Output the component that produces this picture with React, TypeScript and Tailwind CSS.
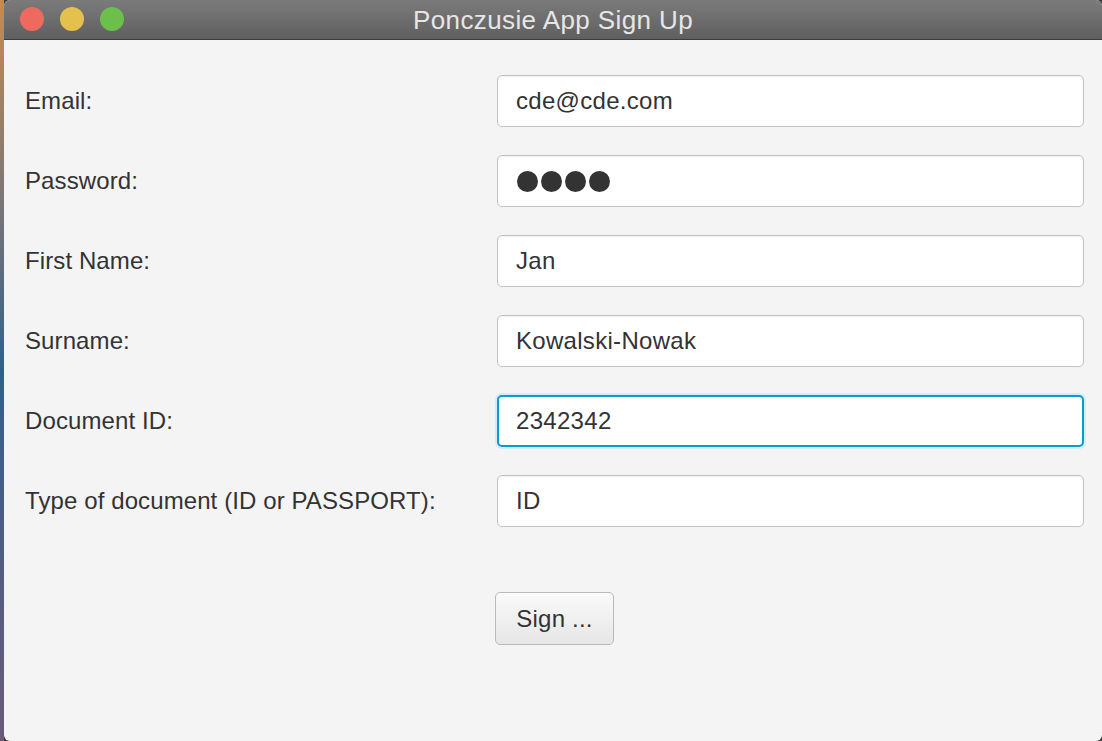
import React from "react";

const font = { fontFamily: '"Liberation Sans", Arial, sans-serif' };

function Field({ label, value, focused, password }: { label: string; value: string; focused?: boolean; password?: boolean }) {
  return (
    <div className="flex items-center h-[52px]">
      <div className="w-[472px] text-[24px] text-[#333] tracking-[0.1px]">{label}</div>
      <div
        className={
          focused
            ? "w-[587px] h-[52px] rounded-[5px] border-2 border-[#0a9bd0] bg-white shadow-[0_0_0_2px_#d4ecf7] flex items-center pl-[17px] text-[24px] text-[#333]"
            : "w-[587px] h-[52px] rounded-[5px] border border-[#c2c2c2] bg-white shadow-[inset_0_1px_2px_rgba(0,0,0,0.06)] flex items-center pl-[18px] text-[24px] text-[#333]"
        }
      >
        {password ? (
          <div className="flex gap-[3px] pl-[1px]">
            <span className="w-[21px] h-[21px] rounded-full bg-[#333]" />
            <span className="w-[21px] h-[21px] rounded-full bg-[#333]" />
            <span className="w-[21px] h-[21px] rounded-full bg-[#333]" />
            <span className="w-[21px] h-[21px] rounded-full bg-[#333]" />
          </div>
        ) : (
          <span className="tracking-[0.3px]">{value}</span>
        )}
      </div>
    </div>
  );
}

export default function App() {
  return (
    <div className="w-[1102px] h-[741px] flex bg-[#3a3a3a] overflow-hidden" style={font}>
      <div className="w-[4px] h-full bg-gradient-to-b from-[#c98a4a] via-[#2e5f8a] to-[#6a5a7a]" />
      <div className="flex-1 flex flex-col rounded-t-[6px] rounded-b-[6px] overflow-hidden bg-[#f4f4f4]">
        <div className="h-[40px] shrink-0 relative bg-gradient-to-b from-[#7b7b7b] to-[#5f5f5f] border-b border-[#3c3c3c] flex items-center justify-center">
          <div className="absolute left-[16px] top-[7px] flex gap-[16px]">
            <span className="w-[24px] h-[24px] rounded-full bg-[#ee6a5e]" />
            <span className="w-[24px] h-[24px] rounded-full bg-[#e4c14d]" />
            <span className="w-[24px] h-[24px] rounded-full bg-[#6cbf4a]" />
          </div>
          <span className="text-[26px] text-[#e6e6e6] tracking-[0.4px] leading-none">Ponczusie App Sign Up</span>
        </div>
        <div className="flex flex-col pt-[35px] pl-[21px]">
          <div className="flex flex-col gap-[28px]">
            <Field label="Email:" value="cde@cde.com" />
            <Field label="Password:" value="" password />
            <Field label="First Name:" value="Jan" />
            <Field label="Surname:" value="Kowalski-Nowak" />
            <Field label="Document ID:" value="2342342" focused />
            <Field label="Type of document (ID or PASSPORT):" value="ID" />
          </div>
          <div className="mt-[65px] pl-[470px]">
            <button className="w-[119px] h-[53px] rounded-[5px] border border-[#b9b9b9] bg-gradient-to-b from-[#fafafa] to-[#e6e6e6] text-[24px] text-[#333] tracking-[0.2px]">
              Sign ...
            </button>
          </div>
        </div>
      </div>
    </div>
  );
}
